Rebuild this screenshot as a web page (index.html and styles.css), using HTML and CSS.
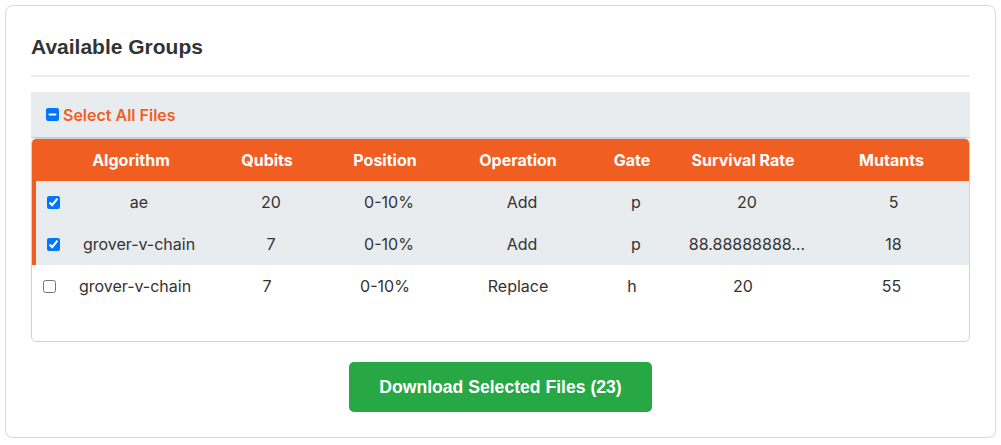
FILE: index.html
```html
<!DOCTYPE html>
<html lang="en">
<head>
<meta charset="utf-8">
<title>Available Groups</title>
<link rel="stylesheet" href="styles.css">
</head>
<body>
<div class="card">
  <h2 class="card-title">Available Groups</h2>
  <div class="select-bar">
    <label class="select-all"><input type="checkbox" id="selectAll" class="select-all-box"><span>Select All Files</span></label>
  </div>
  <div class="table-wrap" role="table">
    <div class="row head" role="row">
      <div class="cell check"></div>
      <div class="cell">Algorithm</div>
      <div class="cell">Qubits</div>
      <div class="cell">Position</div>
      <div class="cell">Operation</div>
      <div class="cell">Gate</div>
      <div class="cell">Survival Rate</div>
      <div class="cell">Mutants</div>
    </div>
    <div class="row selected" role="row">
      <div class="cell check"><input type="checkbox" checked></div>
      <div class="cell">ae</div>
      <div class="cell">20</div>
      <div class="cell">0-10%</div>
      <div class="cell">Add</div>
      <div class="cell">p</div>
      <div class="cell">20</div>
      <div class="cell">5</div>
    </div>
    <div class="row selected" role="row">
      <div class="cell check"><input type="checkbox" checked></div>
      <div class="cell">grover-v-chain</div>
      <div class="cell">7</div>
      <div class="cell">0-10%</div>
      <div class="cell">Add</div>
      <div class="cell">p</div>
      <div class="cell" title="88.88888888888889">88.88888888…</div>
      <div class="cell">18</div>
    </div>
    <div class="row" role="row">
      <div class="cell check"><input type="checkbox"></div>
      <div class="cell">grover-v-chain</div>
      <div class="cell">7</div>
      <div class="cell">0-10%</div>
      <div class="cell">Replace</div>
      <div class="cell">h</div>
      <div class="cell">20</div>
      <div class="cell">55</div>
    </div>
  </div>
  <div class="actions">
    <button class="download" type="button">Download Selected Files (23)</button>
  </div>
</div>
<script src="script.js"></script>
</body>
</html>
```

FILE: styles.css
```css
* { box-sizing: border-box; }

body {
  margin: 5px;
  background: #ffffff;
  font-family: Inter, "Noto Sans", sans-serif;
  color: #333333;
}

.card {
  background: #ffffff;
  border: 1px solid #d9d9de;
  border-radius: 8px;
  box-shadow: 0 1px 4px rgba(0, 0, 0, 0.06);
  padding: 29px 25px 25px;
}

.card-title {
  margin: 0 0 15px;
  padding-bottom: 16px;
  border-bottom: 2px solid #e9ecef;
  font-family: "Liberation Sans", Arial, sans-serif;
  font-size: 21px;
  font-weight: 700;
  line-height: 24px;
  color: #333333;
}

.select-bar {
  background: #e9ecef;
  border-bottom: 1px solid #c8ccd1;
  padding: 12px 15px;
  height: 46px;
  display: flex;
  align-items: center;
}

.select-all {
  display: flex;
  align-items: center;
  gap: 4px;
  font-size: 16px;
  font-weight: 600;
  color: #f15f22;
  cursor: pointer;
}

.select-all-box {
  margin: 0;
  width: 13px;
  height: 13px;
}

.table-wrap {
  border: 1px solid #d0d2d6;
  border-radius: 5px;
  height: 204px;
  overflow: hidden;
}

.row {
  display: grid;
  grid-template-columns: 38px 130px 134px 102px 164px 64px 158px 1fr;
  align-items: center;
  font-size: 16px;
  line-height: 18px;
  background: #ffffff;
  color: #333333;
}

.row .cell {
  padding: 12px 4px;
  text-align: center;
  white-space: nowrap;
}

.row .cell:last-child {
  padding-right: 12px;
}

.row .cell.check {
  padding-left: 7px;
  text-align: left;
  display: flex;
  align-items: center;
}

.row .cell.check input {
  margin: 0 0 0 4px;
  width: 13px;
  height: 13px;
}

.row.head {
  background: #f15e22;
  color: #ffffff;
  font-weight: 700;
  border-radius: 4px 4px 0 0;
}

.row.head .cell:nth-child(2) {
  padding-right: 12px;
}

.row.selected {
  background: #e9ecef;
  border-left: 4px solid #f15e22;
}

.actions {
  display: flex;
  justify-content: center;
  margin-top: 20px;
}

.download {
  background: #28a745;
  color: #ffffff;
  border: none;
  border-radius: 5px;
  padding: 15px 30px;
  font-family: "Liberation Sans", Arial, sans-serif;
  font-size: 17.6px;
  font-weight: 700;
  line-height: 20px;
  cursor: pointer;
}
```

FILE: script.js
```js
document.getElementById('selectAll').indeterminate = true;
```
